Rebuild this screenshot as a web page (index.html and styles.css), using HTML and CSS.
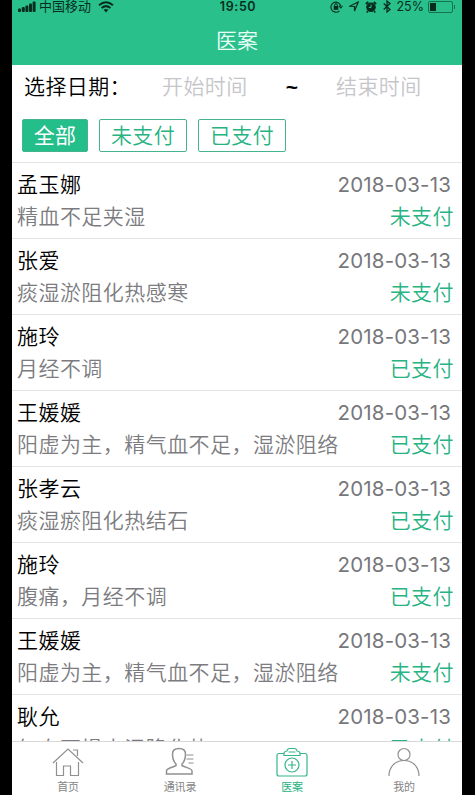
FILE: index.html
```html
<!DOCTYPE html>
<html lang="zh-CN">
<head>
<meta charset="utf-8">
<title>医案</title>
<link rel="stylesheet" href="styles.css">
</head>
<body>
<div class="phone">
  <header class="top">
    <div class="status">
      <div class="carrier">
        <svg width="19" height="12" viewBox="0 0 19 12"><g fill="#082d20"><rect x="0" y="7.5" width="3" height="3.5" rx="1"/><rect x="3.8" y="6" width="3" height="5" rx="1"/><rect x="7.4" y="4.5" width="3" height="6.5" rx="1"/><rect x="11" y="2.5" width="3" height="8.5" rx="1"/><rect x="14.6" y="0.5" width="3" height="10.5" rx="1"/></g></svg>
        <span class="name">中国移动</span>
        <svg class="wifi" width="16" height="12" viewBox="0 0 16 12"><g fill="none" stroke="#082d20" stroke-width="2"><path d="M1 4.2Q8-1.7 15 4.2"/><path d="M3.6 7Q8 3.3 12.4 7"/></g><path d="M5.6 8.8Q8 7 10.4 8.8L8 11.4z" fill="#082d20"/></svg>
      </div>
      <span class="time">19:50</span>
      <div class="indicators">
        <svg width="13" height="12" viewBox="0 0 13 12"><path d="M9.4 9.8A5 5 0 1 1 10.8 5M9 5l2 2 1.5-2.300" fill="none" stroke="#082d20" stroke-width="1.1"/><rect x="3.7" y="5" width="4.6" height="3.8" fill="#082d20"/><path d="M4.7 5V4a1.3 1.3 0 0 1 2.6 0v1" fill="none" stroke="#082d20"/></svg>
        <svg width="10" height="11" viewBox="0 0 10 11"><path d="M.7 5.300L9.200 1 5.500 10V5.500z" fill="none" stroke="#082d20" stroke-width="1.2"/></svg>
        <svg width="12" height="12" viewBox="0 0 12 12"><circle cx="6" cy="6.3" r="4.8" fill="#082d20"/><path d="M.8 3L3.300 1M11.200 3L8.700 1M2.800 10.200l-1 1.300M9.200 10.200l1 1.300" stroke="#082d20" stroke-width="1.8"/><path d="M6 3.500v3H3.800" fill="none" stroke="#29c08c"/></svg>
        <svg width="8" height="13" viewBox="0 0 8 13"><path d="M.7 3.500l6.300 6L4 12V1l3 2.500-6.300 6" fill="none" stroke="#082d20" stroke-width="1.3"/></svg>
        <span class="percent">25%</span>
        <svg width="28" height="12" viewBox="0 0 28 12"><rect x=".5" y=".5" width="24" height="11" rx="1.500" fill="none" stroke="#14724f"/><rect x="2" y="2" width="6" height="8" fill="#082d20"/><path d="M26.500 4v4" stroke="#14724f"/></svg>
      </div>
    </div>
    <h1 class="title">医案</h1>
  </header>
  <section class="dates">
    <span class="label">选择日期：</span><span class="date">开始时间</span><span class="tilde">~</span><span class="date">结束时间</span>
  </section>
  <nav class="filters"><span class="chip active">全部</span><span class="chip">未支付</span><span class="chip">已支付</span></nav>
  <main class="list">
    <article class="row"><div class="line"><span class="patient">孟玉娜</span><time>2018-03-13</time></div><div class="line desc"><span>精血不足夹湿</span><span class="pay">未支付</span></div></article>
    <article class="row"><div class="line"><span class="patient">张爱</span><time>2018-03-13</time></div><div class="line desc"><span>痰湿淤阻化热感寒</span><span class="pay">未支付</span></div></article>
    <article class="row"><div class="line"><span class="patient">施玲</span><time>2018-03-13</time></div><div class="line desc"><span>月经不调</span><span class="pay">已支付</span></div></article>
    <article class="row"><div class="line"><span class="patient">王媛媛</span><time>2018-03-13</time></div><div class="line desc"><span>阳虚为主，精气血不足，湿淤阻络</span><span class="pay">已支付</span></div></article>
    <article class="row"><div class="line"><span class="patient">张孝云</span><time>2018-03-13</time></div><div class="line desc"><span>痰湿瘀阻化热结石</span><span class="pay">已支付</span></div></article>
    <article class="row"><div class="line"><span class="patient">施玲</span><time>2018-03-13</time></div><div class="line desc"><span>腹痛，月经不调</span><span class="pay">已支付</span></div></article>
    <article class="row"><div class="line"><span class="patient">王媛媛</span><time>2018-03-13</time></div><div class="line desc"><span>阳虚为主，精气血不足，湿淤阻络</span><span class="pay">未支付</span></div></article>
    <article class="row"><div class="line"><span class="patient">耿允</span><time>2018-03-13</time></div><div class="line desc"><span>气血不损水湿降化热</span><span class="pay">已支付</span></div></article>
  </main>
  <footer class="tabs">
    <div class="tab"><svg width="34" height="32" viewBox="0 0 34 32"><path d="M2 17L17 3l15 14M5.500 16v13.500h7V20h7v9.500h8V16M22 4h4.500v6" /></svg><span>首页</span></div>
    <div class="tab"><svg width="34" height="32" viewBox="0 0 34 32"><path d="M13 18c-3-3-3.500-5-3.500-10C9.500 4.500 12 2.500 16 2.500s6.500 2 6.500 5.500c0 5-.5 7-3.500 10v1.500c4 2.500 10 2.500 10 5.500v3H3.500v-3c0-3 5.500-3 9.500-5.500z" stroke-width="1.5"/><path d="M23.500 9h7M23.500 13h7M25.500 17h5"/></svg><span>通讯录</span></div>
    <div class="tab selected"><svg width="34" height="32" viewBox="0 0 34 32"><path d="M9 7.500H4a2 2 0 0 0-2 2V28a2 2 0 0 0 2 2h26a2 2 0 0 0 2-2V9.500a2 2 0 0 0-2-2h-5"/><path d="M9 9.500V7q0-1.500 3-2 .5-2.500 2.500-2.500h5q2 0 2.500 2.500 3 .5 3 2v2.500zM13.500 6h7"/><circle cx="17" cy="19" r="7"/><path d="M17 15v8M13 19h8"/></svg><span>医案</span></div>
    <div class="tab"><svg width="34" height="32" viewBox="0 0 34 32"><circle cx="17" cy="8.500" r="6"/><path d="M2 30c0-9 6-15.500 15-15.500S32 21 32 30"/></svg><span>我的</span></div>
  </footer>
</div>
</body>
</html>
```
FILE: styles.css
```css
* { box-sizing: border-box; }
body {
  margin: 0;
  background: #000;
  font-family: "Liberation Sans", "Noto Sans CJK SC", sans-serif;
  font-size: 21px;
}
svg { display: block; flex: none; }
.phone {
  width: 450px;
  height: 795px;
  margin-left: 12px;
  background: #fff;
  display: flex;
  flex-direction: column;
  overflow: hidden;
}
.top { height: 65px; flex: none; background: #29c08c; }
.status {
  height: 13px;
  display: grid;
  grid-template-columns: 1fr auto 1fr;
  align-items: center;
  padding: 0 6px 0 6px;
  font-size: 13px;
  line-height: 13px;
  color: #082d20;
}
.carrier { display: flex; align-items: center; gap: 2px; }
.wifi { margin-left: 5px; }
.time { font-family: Inter, sans-serif; font-weight: 600; font-size: 12.5px; letter-spacing: .6px; padding-left: 2px; }
.indicators { display: flex; justify-content: flex-end; align-items: center; gap: 6px; }
.percent { font-family: Inter, sans-serif; font-size: 12.5px; margin-right: -2px; }
.title {
  margin: 0;
  padding-top: 12px;
  text-align: center;
  font-size: 21px;
  font-weight: 350;
  line-height: 32px;
  color: #e9fff6;
}
.dates {
  height: 45px;
  flex: none;
  display: flex;
  align-items: center;
  padding: 0 0 5px 12px;
  font-weight: 350;
  letter-spacing: .4px;
}
.label { width: 138px; white-space: nowrap; color: #000; }
.date { width: 86px; color: #c6c6ca; }
.tilde { width: 88px; padding-top: 4px; text-align: center; font-weight: 700; color: #000; }
.filters { height: 52px; flex: none; display: flex; gap: 11px; padding: 9px 10px 0; }
.chip {
  width: 88px;
  height: 33px;
  border: 1px solid #45b48d;
  border-radius: 2px;
  color: #27b382;
  text-align: center;
  font-weight: 350;
  line-height: 31px;
  letter-spacing: .3px;
}
.chip.active { width: 66px; background: #24be8b; color: #fff; font-weight: 400; }
.list { flex: 1; min-height: 0; overflow: hidden; }
.row {
  height: 76.05px;
  border-top: 1px solid #e3e3e5;
  padding: 5px 8px 0 5px;
  font-weight: 350;
}
.line {
  display: flex;
  justify-content: space-between;
  height: 32px;
  line-height: 33px;
  letter-spacing: .45px;
  white-space: nowrap;
}
.patient { color: #000; }
.line time { font-family: Inter, sans-serif; font-weight: 400; font-size: 20.5px; letter-spacing: .15px; color: #77777b; margin-right: 3px; }
.desc { color: #7c7c80; }
.pay { color: #27b382; }
.tabs {
  height: 54px;
  flex: none;
  display: grid;
  grid-template-columns: repeat(4, 1fr);
  padding-right: 2px;
  border-top: 1px solid #d8d8d8;
  background: #fff;
}
.tab {
  display: flex;
  flex-direction: column;
  align-items: center;
  padding-top: 4px;
  font-size: 11px;
  line-height: 19px;
  color: #858585;
}
.tab span { letter-spacing: -.2px; }
.tab svg { fill: none; stroke: #909090; stroke-width: 1.2; }
.tab.selected { color: #27b382; }
.tab.selected svg { stroke: #35b68a; }
```
